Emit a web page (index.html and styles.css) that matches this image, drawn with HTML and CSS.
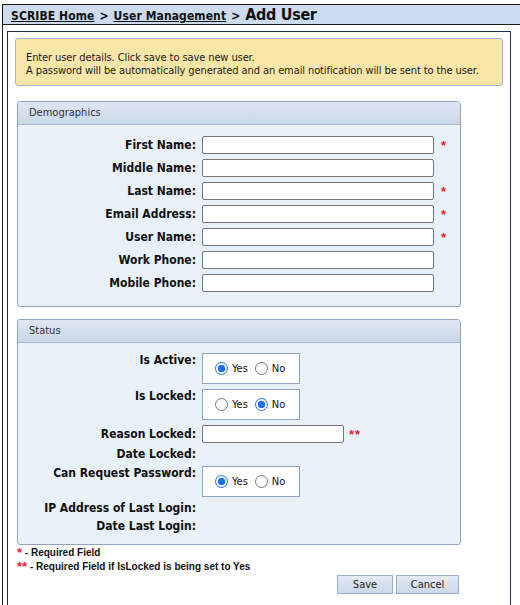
FILE: index.html
```html
<!DOCTYPE html>
<html>
<head>
<meta charset="utf-8">
<title>Add User</title>
<link rel="stylesheet" href="styles.css">
</head>
<body>
<div class="page">
  <div class="titlebar">
    <a class="crumb" href="#">SCRIBE Home</a><span class="sep">&gt;</span><a class="crumb" href="#">User Management</a><span class="sep">&gt;</span><span class="current">Add User</span>
  </div>
  <div class="box">
    <div class="notice">
      Enter user details. Click save to save new user.<br>
      A password will be automatically generated and an email notification will be sent to the user.
    </div>
    <div class="content">
      <div class="panel">
        <div class="panel-head">Demographics</div>
        <div class="panel-body grid">
          <label class="lbl">First Name:</label>
          <div class="field"><input class="txt" type="text"><span class="req">*</span></div>
          <label class="lbl">Middle Name:</label>
          <div class="field"><input class="txt" type="text"></div>
          <label class="lbl">Last Name:</label>
          <div class="field"><input class="txt" type="text"><span class="req">*</span></div>
          <label class="lbl">Email Address:</label>
          <div class="field"><input class="txt" type="text"><span class="req">*</span></div>
          <label class="lbl">User Name:</label>
          <div class="field"><input class="txt" type="text"><span class="req">*</span></div>
          <label class="lbl">Work Phone:</label>
          <div class="field"><input class="txt" type="text"></div>
          <label class="lbl">Mobile Phone:</label>
          <div class="field"><input class="txt" type="text"></div>
        </div>
      </div>

      <div class="panel panel-status">
        <div class="panel-head">Status</div>
        <div class="panel-body grid">
          <label class="lbl top">Is Active:</label>
          <div class="field"><div class="radios"><label class="opt"><input type="radio" name="active" checked>Yes</label><label class="opt"><input type="radio" name="active">No</label></div></div>
          <label class="lbl top">Is Locked:</label>
          <div class="field"><div class="radios"><label class="opt"><input type="radio" name="locked">Yes</label><label class="opt"><input type="radio" name="locked" checked>No</label></div></div>
          <label class="lbl">Reason Locked:</label>
          <div class="field"><input class="txt short" type="text"><span class="req req2">**</span></div>
          <label class="lbl plain">Date Locked:</label>
          <div class="field plain"></div>
          <label class="lbl top">Can Request Password:</label>
          <div class="field"><div class="radios"><label class="opt"><input type="radio" name="canreq" checked>Yes</label><label class="opt"><input type="radio" name="canreq">No</label></div></div>
          <label class="lbl plain">IP Address of Last Login:</label>
          <div class="field plain"></div>
          <label class="lbl plain">Date Last Login:</label>
          <div class="field plain"></div>
        </div>
      </div>

      <div class="notes">
        <div><span class="star">*</span> - Required Field</div>
        <div><span class="star">**</span> - Required Field if IsLocked is being set to Yes</div>
      </div>

      <div class="buttons">
        <button class="btn save" type="button">Save</button>
        <button class="btn cancel" type="button">Cancel</button>
      </div>
    </div>
  </div>
</div>
</body>
</html>
```

FILE: styles.css
```css
html, body {
  margin: 0;
  padding: 0;
  background: #fff;
}
body {
  font-family: "DejaVu Sans Condensed", "DejaVu Sans", Verdana, sans-serif;
  font-size: 11px;
  color: #111;
}
.page {
  margin: 4px 0 0 2px;
  border-left: 1px solid #1b1b1b;
  height: 601px;
}
.titlebar {
  border-top: 1px solid #1b1b1b;
  border-bottom: 1px solid #1b1b1b;
  background: #cddbee;
  height: 19px;
  line-height: 19px;
  padding-left: 8px;
  white-space: nowrap;
  font-weight: bold;
}
.crumb {
  color: #111;
  font-size: 12px;
  letter-spacing: 0.1px;
  text-decoration: underline;
}
.sep {
  font-size: 12px;
  margin: 0 5px;
}
.current {
  font-size: 16px;
  letter-spacing: -0.3px;
}
.box {
  margin: 6px 9px 0 4px;
  border: 1px solid #1f2e4d;
  height: 568px;
  padding: 6px 7px 0 7px;
}
.notice {
  box-sizing: border-box;
  background: #f8e6a8;
  border: 1px solid #a5b4cb;
  border-radius: 3px;
  height: 48px;
  padding: 3px 10px 0 10px;
  display: flex;
  flex-direction: column;
  justify-content: center;
  line-height: 13px;
  letter-spacing: -0.1px;
  color: #1a1a1a;
}
.content {
  width: 444px;
  margin: 15px 0 0 2px;
}
.panel {
  border: 1px solid #8fa3c1;
  border-radius: 3px 4px 3px 3px;
  background: #e8f0f8;
  overflow: hidden;
}
.panel-status {
  margin-top: 12px;
}
.panel-head {
  height: 22px;
  line-height: 22px;
  padding-left: 11px;
  background: linear-gradient(#dee7f3, #c9d7e8);
  border-bottom: 1px solid #a9bbd3;
  color: #333;
}
.grid {
  display: grid;
  grid-template-columns: 178px 1fr;
  column-gap: 6px;
  row-gap: 5px;
}
.panel-body {
  padding: 11px 0 14px 0;
}
.panel-status .panel-body {
  padding: 10px 0 11px 0;
}
.lbl {
  font-weight: bold;
  font-size: 12px;
  text-align: right;
  line-height: 18px;
  white-space: nowrap;
}
.lbl.top {
  line-height: 14px;
  padding-top: 0;
}
.lbl.plain {
  line-height: 13px;
}
.field {
  display: flex;
  align-items: center;
  min-height: 13px;
}
.txt {
  box-sizing: border-box;
  width: 232px;
  height: 18px;
  border: 1px solid #767676;
  border-radius: 2px;
  background: #fff;
  margin: 0;
  padding: 0 3px;
  font: inherit;
}
.txt.short {
  width: 142px;
}
.req {
  color: #f0202e;
  font-family: "Liberation Sans", Arial, sans-serif;
  font-weight: bold;
  font-size: 13px;
  margin-left: 7px;
  line-height: 12px;
  padding-top: 2px;
}
.req2 {
  margin-left: 5px;
  letter-spacing: 1px;
}
.radios {
  box-sizing: border-box;
  width: 98px;
  height: 31px;
  border: 1px solid #8fa3c1;
  background: #fff;
  display: flex;
  align-items: center;
  padding-left: 12px;
  gap: 7px;
}
.opt {
  display: flex;
  align-items: center;
  gap: 4px;
  color: #111;
}
.opt input {
  appearance: none;
  -webkit-appearance: none;
  width: 13px;
  height: 13px;
  margin: 0;
  border: 1px solid #777;
  border-radius: 50%;
  background: #fff;
  box-sizing: border-box;
}
.opt input:checked {
  border: 1px solid #1c6ef3;
  background: radial-gradient(circle, #1c6ef3 0 3.4px, #fff 4px);
}
.notes {
  margin-top: 1px;
  font-family: "Liberation Sans", Arial, sans-serif;
  font-weight: bold;
  font-size: 10px;
  line-height: 14px;
  color: #111;
}
.star {
  color: #f0202e;
  font-size: 13px;
  vertical-align: -1px;
}
.buttons {
  display: flex;
  justify-content: flex-end;
  gap: 3px;
  margin-top: 1px;
  margin-right: 2px;
}
.btn {
  height: 19px;
  border: 1px solid #9aaecb;
  background: linear-gradient(#e3ebf5, #cad8ea);
  font: inherit;
  color: #222;
  padding: 0;
  margin: 0;
}
.btn.save { width: 56px; }
.btn.cancel { width: 63px; }
```
